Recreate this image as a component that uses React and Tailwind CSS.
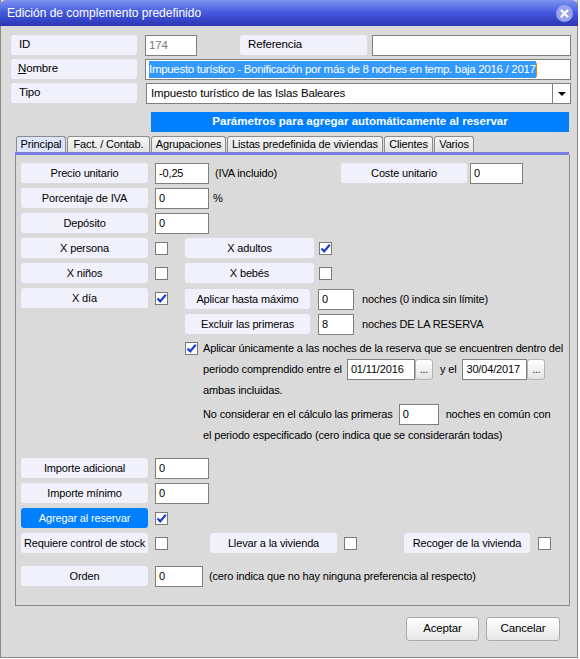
import React from "react";
import clsx from "clsx";

const Check = ({ checked }) => (
  <span className="w-[13px] h-[13px] border border-[#7a7a7a] bg-white flex items-center justify-center shrink-0">
    {checked && (
      <svg width="11" height="11" viewBox="0 0 11 11">
        <path d="M1.5 5.5 L4.2 8.3 L9.8 1.8" stroke="#1c3fd0" strokeWidth="2.2" fill="none" />
      </svg>
    )}
  </span>
);

const Lbl = ({ children, className, active }) => (
  <div
    className={clsx(
      "h-[20px] rounded-[3px] flex items-center justify-center shrink-0 whitespace-nowrap",
      active ? "bg-[#0080ff] text-white" : "bg-[#f1f1fc] text-black",
      className
    )}
  >
    {children}
  </div>
);

const Inp = ({ children, className }) => (
  <div
    className={clsx(
      "h-[21px] bg-white border border-[#7f7f7f] pl-[3px] flex items-center shrink-0 whitespace-nowrap",
      className
    )}
  >
    {children}
  </div>
);

const DotsBtn = () => (
  <div className="w-[18px] h-[21px] rounded-[3px] border border-[#b4b4b4] bg-gradient-to-b from-white to-[#e4e4e4] flex items-center justify-center text-[10px] shrink-0">
    ...
  </div>
);

// fixed tab widths, taken from the dialog
const tabs = [
  { t: "Principal", w: "w-[50px]" },
  { t: "Fact. / Contab.", w: "w-[83px]" },
  { t: "Agrupaciones", w: "w-[75px]" },
  { t: "Listas predefinida de viviendas", w: "w-[156px]" },
  { t: "Clientes", w: "w-[49px]" },
  { t: "Varios", w: "w-[40px]" },
];

const App = () => {
  return (
    <div className="w-[580px] h-[659px] bg-white" style={{ fontFamily: '"Liberation Sans", Arial, sans-serif' }}>
      <div className="w-[578px] h-[658px] bg-[#dadada] border-x border-b border-[#8a8a8a] flex flex-col text-[11px] tracking-[-0.15px] text-black">
        {/* title bar */}
        <div className="h-[26px] -mx-px rounded-t-[6px] bg-gradient-to-b from-[#7d92f0] via-[#4457dc] to-[#2a36b4] flex items-center justify-between pl-[7px] pr-[5px]">
          <span className="text-white text-[12px] tracking-normal">Edición de complemento predefinido</span>
          <span className="w-[17px] h-[17px] rounded-full bg-[#97a3ee] flex items-center justify-center">
            <svg width="9" height="9" viewBox="0 0 9 9">
              <path d="M1.5 1.5 L7.5 7.5 M7.5 1.5 L1.5 7.5" stroke="white" strokeWidth="2.2" strokeLinecap="round" />
            </svg>
          </span>
        </div>

        {/* header fields */}
        <div className="flex flex-col gap-[3px] pl-[10px] pt-[9px]">
          <div className="flex items-start">
            <Lbl className="w-[126px] justify-start pl-[8px] text-[11.5px]">ID</Lbl>
            <Inp className="w-[52px] ml-[8px] text-[#7a7a7a] text-[11.5px]">174</Inp>
            <Lbl className="w-[127px] ml-[43px] justify-start pl-[8px] text-[11.5px]">Referencia</Lbl>
            <Inp className="w-[199px] ml-[5px]" />
          </div>
          <div className="flex items-start">
            <Lbl className="w-[126px] justify-start pl-[7px] text-[11.5px]">
              <span><span className="underline">N</span>ombre</span>
            </Lbl>
            <Inp className="w-[426px] ml-[8px] pl-[2px] text-[11.5px] tracking-[-0.3px]">
              <span className="bg-[#3399ff] text-white">Impuesto turístico - Bonificación por más de 8 noches en temp. baja 2016 / 2017</span>
              <span className="w-px h-[14px] bg-[#ff8000]" />
            </Inp>
          </div>
          <div className="flex items-start">
            <Lbl className="w-[126px] justify-start pl-[8px] text-[11.5px]">Tipo</Lbl>
            <Inp className="w-[425px] ml-[9px] pl-[4px] pr-0 text-[11.5px] justify-between">
              <span>Impuesto turístico de las Islas Baleares</span>
              <span className="w-[18px] h-full border-l border-[#7f7f7f] flex items-center justify-center">
                <svg width="8" height="4" viewBox="0 0 8 4"><path d="M0 0 H8 L4 4 Z" fill="black" /></svg>
              </span>
            </Inp>
          </div>
        </div>

        {/* blue banner */}
        <div className="ml-[150px] mt-[8px] w-[418px] h-[20px] bg-[#0080ff] text-white font-bold text-[11.5px] tracking-normal flex items-center justify-center">
          Parámetros para agregar automáticamente al reservar
        </div>

        {/* tabs */}
        <div className="ml-[15px] mt-[4px] flex items-end h-[16px]">
          {tabs.map((tab, i) => (
            <div
              key={tab.t}
              className={clsx(
                "h-[16px] border border-b-0 border-[#8c8c8c] rounded-t-[3px] flex items-center justify-center whitespace-nowrap mr-px",
                tab.w,
                i === 0 ? "bg-[#dde5fb]" : "bg-gradient-to-b from-[#f6f6f6] to-[#e2e2e2]"
              )}
            >
              {tab.t}
            </div>
          ))}
        </div>
        <div className="ml-[14px] w-[554px] h-[3px] bg-[#7b7be0]" />

        {/* panel */}
        <div className="ml-[14px] w-[555px] h-[451px] border-x border-b border-[#8a8a8a] pl-[5px] pt-[8px] flex flex-col">
          <div className="flex flex-col gap-[4px]">
            <div className="flex items-start h-[21px]">
              <Lbl className="w-[127px]">Precio unitario</Lbl>
              <Inp className="w-[54px] ml-[7px]">-0,25</Inp>
              <span className="w-[132px] pl-[6px] h-[21px] flex items-center">(IVA incluido)</span>
              <Lbl className="w-[126px]">Coste unitario</Lbl>
              <Inp className="w-[53px] ml-[3px]">0</Inp>
            </div>
            <div className="flex items-start h-[21px]">
              <Lbl className="w-[127px]">Porcentaje de IVA</Lbl>
              <Inp className="w-[54px] ml-[7px]">0</Inp>
              <span className="pl-[4px] h-[21px] flex items-center">%</span>
            </div>
            <div className="flex items-start h-[21px]">
              <Lbl className="w-[127px]">Depósito</Lbl>
              <Inp className="w-[54px] ml-[7px]">0</Inp>
            </div>
            <div className="flex items-start h-[21px]">
              <Lbl className="w-[127px]">X persona</Lbl>
              <div className="w-[30px] ml-[7px] h-[20px] flex items-center"><Check /></div>
              <Lbl className="w-[129px]">X adultos</Lbl>
              <div className="ml-[5px] h-[20px] flex items-center"><Check checked /></div>
            </div>
            <div className="flex items-start h-[21px]">
              <Lbl className="w-[127px]">X niños</Lbl>
              <div className="w-[30px] ml-[7px] h-[20px] flex items-center"><Check /></div>
              <Lbl className="w-[129px]">X bebés</Lbl>
              <div className="ml-[5px] h-[20px] flex items-center"><Check /></div>
            </div>
            <div className="flex items-start h-[21px]">
              <Lbl className="w-[127px]">X día</Lbl>
              <div className="w-[30px] ml-[7px] h-[20px] flex items-center"><Check checked /></div>
              <Lbl className="w-[125px] mt-px">Aplicar hasta máximo</Lbl>
              <Inp className="w-[36px] ml-[8px] mt-px">0</Inp>
              <span className="pl-[8px] h-[21px] mt-px flex items-center">noches (0 indica sin límite)</span>
            </div>
            <div className="flex items-start h-[21px] pl-[164px] mt-px">
              <Lbl className="w-[125px]">Excluir las primeras</Lbl>
              <Inp className="w-[36px] ml-[8px]">8</Inp>
              <span className="pl-[8px] h-[21px] flex items-center">noches DE LA RESERVA</span>
            </div>
          </div>

          {/* period block */}
          <div className="pl-[164px] mt-[6px] flex flex-col">
            <div className="flex items-center h-[14px] gap-[5px] whitespace-nowrap">
              <Check checked />
              <span>Aplicar únicamente a las noches de la reserva que se encuentren dentro del</span>
            </div>
            <div className="pl-[18px] flex flex-col">
              <div className="flex items-center h-[21px] mt-[4px]">
                <span>periodo comprendido entre el</span>
                <Inp className="w-[68px] ml-[5px]">01/11/2016</Inp>
                <DotsBtn />
                <span className="ml-[7px]">y el</span>
                <Inp className="w-[65px] ml-[6px]">30/04/2017</Inp>
                <DotsBtn />
              </div>
              <div className="h-[20px] flex items-center">ambas incluidas.</div>
              <div className="flex items-center h-[21px] mt-[4px]">
                <span>No considerar en el cálculo las primeras</span>
                <Inp className="w-[40px] ml-[6px]">0</Inp>
                <span className="ml-[7px]">noches en común con</span>
              </div>
              <div className="h-[20px] flex items-center">el periodo especificado (cero indica que se considerarán todas)</div>
            </div>
          </div>

          <div className="flex flex-col gap-[4px] mt-[13px]">
            <div className="flex items-start h-[21px]">
              <Lbl className="w-[127px]">Importe adicional</Lbl>
              <Inp className="w-[54px] ml-[7px]">0</Inp>
            </div>
            <div className="flex items-start h-[21px]">
              <Lbl className="w-[127px]">Importe mínimo</Lbl>
              <Inp className="w-[54px] ml-[7px]">0</Inp>
            </div>
            <div className="flex items-start h-[21px]">
              <Lbl className="w-[127px]" active>Agregar al reservar</Lbl>
              <div className="ml-[7px] h-[20px] flex items-center"><Check checked /></div>
            </div>
            <div className="flex items-start h-[21px]">
              <Lbl className="w-[127px]">Requiere control de stock</Lbl>
              <div className="w-[55px] ml-[7px] h-[20px] flex items-center"><Check /></div>
              <Lbl className="w-[127px]">Llevar a la vivienda</Lbl>
              <div className="w-[60px] ml-[7px] h-[20px] flex items-center"><Check /></div>
              <Lbl className="w-[126px]">Recoger de la vivienda</Lbl>
              <div className="ml-[8px] h-[20px] flex items-center"><Check /></div>
            </div>
          </div>

          <div className="flex items-start h-[21px] mt-[12px]">
            <Lbl className="w-[127px]">Orden</Lbl>
            <Inp className="w-[48px] ml-[7px]">0</Inp>
            <span className="pl-[6px] h-[21px] flex items-center">(cero indica que no hay ninguna preferencia al respecto)</span>
          </div>
        </div>

        {/* buttons */}
        <div className="flex justify-end gap-[7px] pr-[17px] mt-[11px]">
          <button className="w-[73px] h-[24px] rounded-[3px] border border-[#a8a8a8] bg-gradient-to-b from-white to-[#e6e6e6] text-[11.5px]">Aceptar</button>
          <button className="w-[74px] h-[24px] rounded-[3px] border border-[#a8a8a8] bg-gradient-to-b from-white to-[#e6e6e6] text-[11.5px]">Cancelar</button>
        </div>
      </div>
    </div>
  );
};

export default App;
